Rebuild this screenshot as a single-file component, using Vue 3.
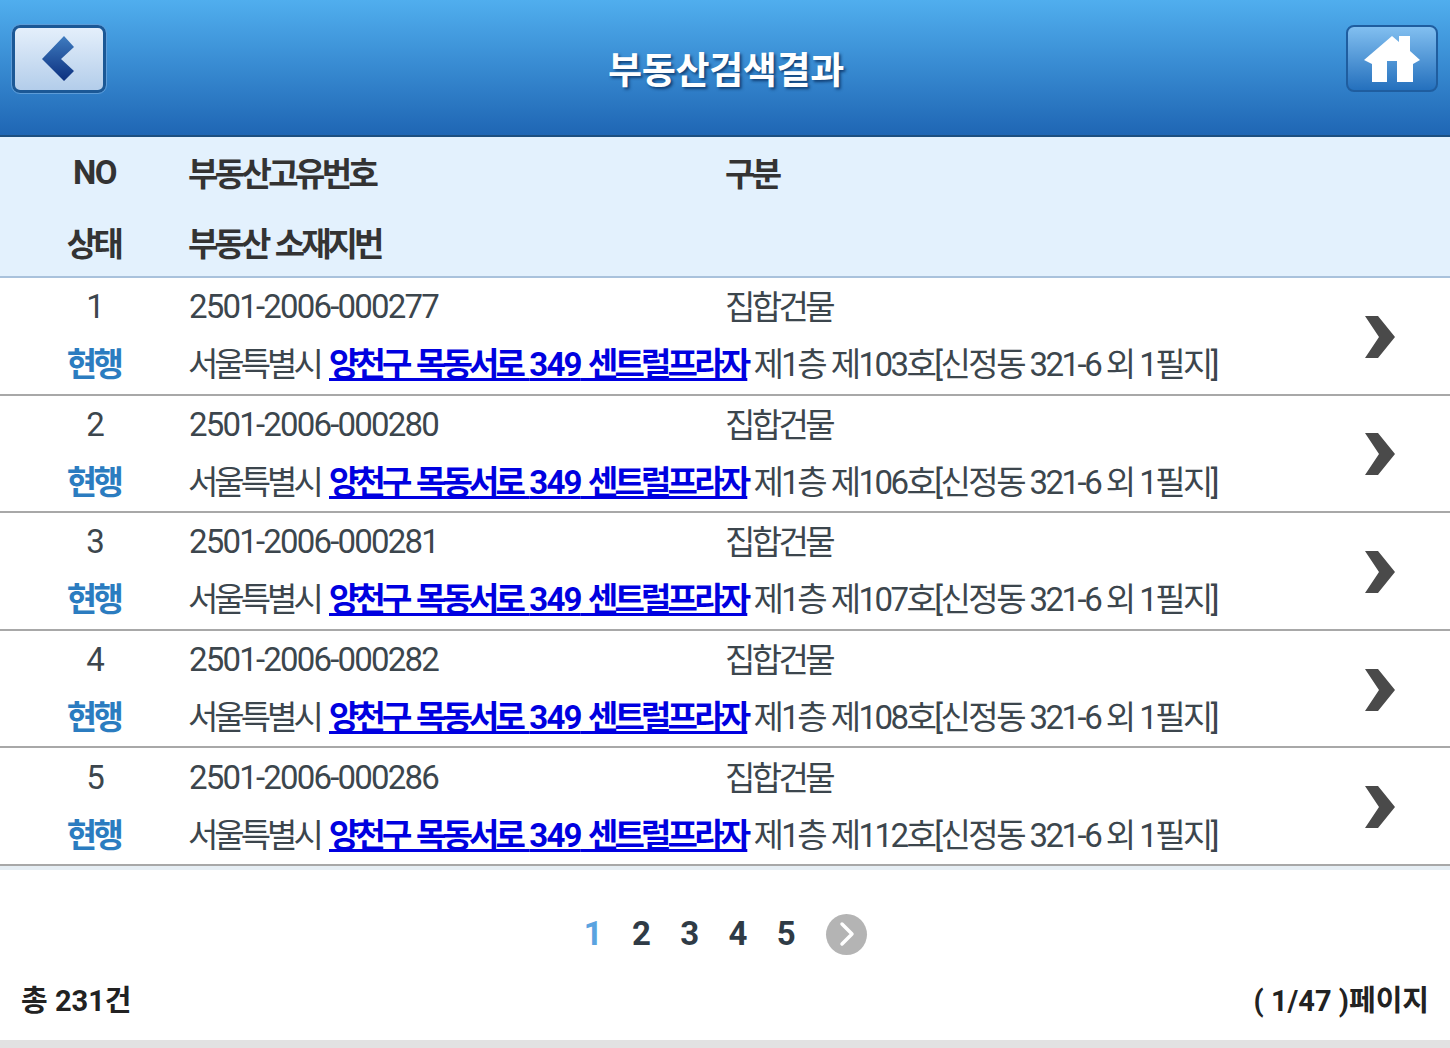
<script setup>
const rows = [
  { no: 1, id: '2501-2006-000277', rest: '제1층 제103호[신정동 321-6 외 1필지]' },
  { no: 2, id: '2501-2006-000280', rest: '제1층 제106호[신정동 321-6 외 1필지]' },
  { no: 3, id: '2501-2006-000281', rest: '제1층 제107호[신정동 321-6 외 1필지]' },
  { no: 4, id: '2501-2006-000282', rest: '제1층 제108호[신정동 321-6 외 1필지]' },
  { no: 5, id: '2501-2006-000286', rest: '제1층 제112호[신정동 321-6 외 1필지]' },
]
</script>

<template>
  <div class="page">
    <header class="top">
      <div class="btn back">
        <svg width="36" height="48" viewBox="0 0 36 48"><defs><linearGradient id="bk" x1="0" y1="0" x2="0" y2="1"><stop offset="0" stop-color="#3f7cc0"/><stop offset="1" stop-color="#0b2f7e"/></linearGradient></defs><path d="M23 1 L33 12 L20 24 L33 36 L23 46 L1 24 Z" fill="url(#bk)"/></svg>
      </div>
      <h1 class="title">부동산검색결과</h1>
      <div class="btn home">
        <svg width="58" height="50" viewBox="0 0 58 50"><path d="M29 2 L36 8 L36 2 L47 2 L47 17 L57 26 L50 30 L50 48 L34 48 L34 27 L24 27 L24 48 L9 48 L9 30 L1 26 Z" fill="#fff"/></svg>
      </div>
    </header>

    <section class="thead">
      <div class="line">
        <span class="c1 latin">NO</span><span class="c2">부동산고유번호</span><span class="c3">구분</span>
      </div>
      <div class="line">
        <span class="c1 kr">상태</span><span class="c2 spaced">부동산 소재지번</span>
      </div>
    </section>

    <div v-for="r in rows" :key="r.no" class="row">
      <div class="cells">
        <div class="l1">
          <span class="c1 latin">{{ r.no }}</span><span class="c2 latin id">{{ r.id }}</span><span class="c3">집합건물</span>
        </div>
        <div class="l2">
          <span class="c1 kr state">현행</span>
          <span class="addr">서울특별시 <a class="lnk">양천구 목동서로 <span class="num">349</span> 센트럴프라자</a> <span class="rest">{{ r.rest }}</span></span>
        </div>
      </div>
      <svg class="arrow" width="32" height="44" viewBox="0 0 32 44"><path d="M1 1 L14 1 L31 22 L14 43 L1 43 L15 22 Z" fill="#4a4a4a"/></svg>
    </div>

    <div class="sep"></div>

    <nav class="pager">
      <span class="pn on">1</span><span class="pn">2</span><span class="pn">3</span><span class="pn">4</span><span class="pn">5</span>
      <span class="next"><svg width="18" height="26" viewBox="0 0 18 26"><path d="M4 3 L14 13 L4 23" fill="none" stroke="#fff" stroke-width="3.5" stroke-linecap="round" stroke-linejoin="round"/></svg></span>
    </nav>

    <footer class="foot"><span>총 231건</span><span>( 1/47 )페이지</span></footer>
    <div class="bottom"></div>
  </div>
</template>

<style>
html, body { margin: 0; background: #fff; }
</style>

<style scoped>
.page {
  width: 1450px;
  height: 1048px;
  overflow: hidden;
  display: flex;
  flex-direction: column;
  font-family: Roboto, "Noto Sans CJK KR", sans-serif;
  color: #3c464d;
  font-size: 33px;
  letter-spacing: -3.6px;
}
.top {
  flex: none;
  height: 110px;
  border-bottom: 2px solid #1c4f80;
  background: linear-gradient(#50aeee, #1f66b4);
  display: flex;
  align-items: flex-start;
  justify-content: space-between;
  padding: 25px 12px 0;
}
.btn {
  box-sizing: border-box;
  display: flex;
  align-items: center;
  justify-content: center;
  border-radius: 8px;
}
.back {
  width: 94px;
  height: 68px;
  border: 3px solid #1b5896;
  outline: 1px solid #5d9cd8;
  background: linear-gradient(#e4effb, #b3cdea);
  padding-right: 1px;
}
.home {
  width: 92px;
  height: 67px;
  border: 2px solid #1f5d9f;
  background: linear-gradient(#82bff0, #2470bd);
}
.title {
  margin: 22px 0 0;
  color: #fff;
  font-size: 37px;
  font-weight: 700;
  letter-spacing: -0.3px;
  line-height: 50px;
  text-shadow: 2px 2px 3px rgba(10, 50, 100, 0.85);
}
.thead {
  flex: none;
  box-sizing: border-box;
  height: 141px;
  background: #e3f1fd;
  border-bottom: 2px solid #a9c2dc;
  font-weight: 700;
  color: #333;
}
.line {
  height: 70px;
  display: flex;
  align-items: center;
}
.c1 { width: 189px; text-align: center; flex: none; }
.c1.kr { width: 187px; margin-right: 2px; }
.c2 { width: 537px; flex: none; margin-left: -1px; margin-right: 1px; }
.c2.id { margin-left: 0; margin-right: 0; }
.c3 { flex: none; margin-left: -1px; }
.spaced { letter-spacing: -3.9px; word-spacing: 3px; }
.latin { letter-spacing: -1.8px; }
.thead .latin { letter-spacing: -1.6px; }
.row {
  flex: none;
  box-sizing: border-box;
  height: 117.6px;
  border-bottom: 2px solid #a8a8a8;
  display: flex;
  align-items: center;
}
.cells { width: 1364px; flex: none; margin-top: -3px; }
.l1 { height: 57px; display: flex; align-items: center; }
.l1 .latin { margin-top: 1px; }
.l1 .c3 { margin-bottom: 2px; }
.l2 { height: 57px; margin-top: -1px; display: flex; align-items: center; white-space: pre; }
.state { color: #2b7cc0; font-weight: 700; }
.addr { letter-spacing: -4px; word-spacing: 3px; margin-left: -1px; }
.lnk {
  color: #0000e0;
  font-weight: 700;
  text-decoration: underline;
  letter-spacing: -3.8px;
  word-spacing: 2.8px;
  margin-left: 2px;
  margin-right: -2px;
}
.num { letter-spacing: -1.8px; }
.rest { letter-spacing: -2.55px; word-spacing: 0; margin-left: 1px; }
.arrow { flex: none; margin-top: 2px; }
.sep { height: 4px; flex: none; background: #e6eef4; }
.pager {
  flex: none;
  height: 108px;
  box-sizing: border-box;
  padding-top: 44px;
  display: flex;
  align-items: flex-start;
  padding-left: 569px;
}
.pn {
  width: 48.3px;
  text-align: center;
  font-weight: 700;
  line-height: 40px;
  letter-spacing: 0;
  color: #2f3b46;
}
.pn.on { color: #5aa3e0; }
.next {
  width: 41px;
  height: 41px;
  margin-left: 16px;
  border-radius: 50%;
  background: #b4b4b4;
  display: flex;
  align-items: center;
  justify-content: center;
}
.foot {
  flex: none;
  display: flex;
  justify-content: space-between;
  padding: 0 21px;
  height: 40px;
  align-items: center;
  font-size: 29px;
  font-weight: 700;
  color: #222;
  letter-spacing: 0;
}
.bottom { flex: 1; background: #e2e2e2; margin-top: 22px; }
</style>
